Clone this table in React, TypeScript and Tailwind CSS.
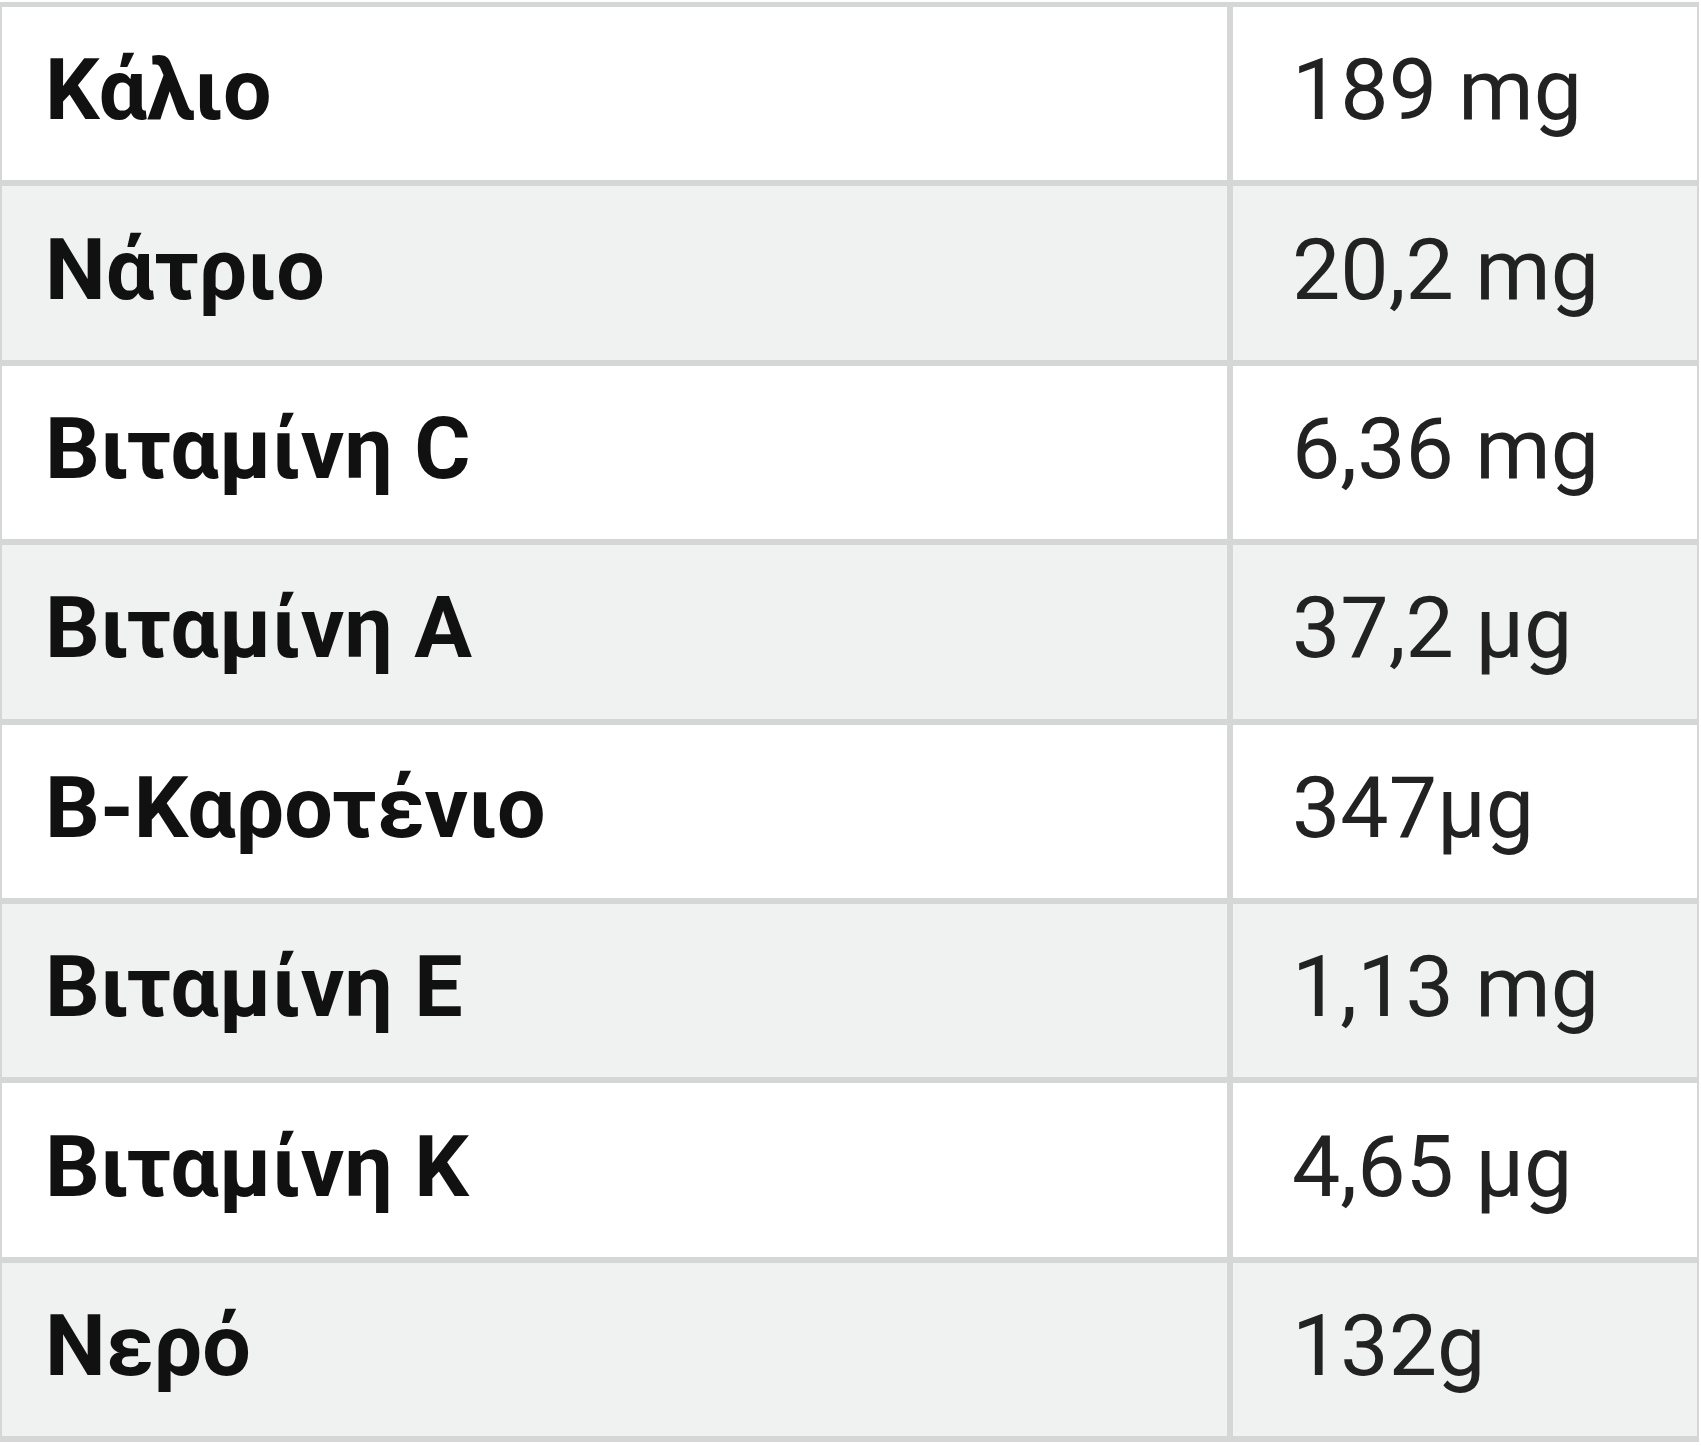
const rows: [string, string][] = [
  ['Κάλιο', '189 mg'],
  ['Νάτριο', '20,2 mg'],
  ['Βιταμίνη C', '6,36 mg'],
  ['Βιταμίνη A', '37,2 μg'],
  ['Β-Καροτένιο', '347μg'],
  ['Βιταμίνη E', '1,13 mg'],
  ['Βιταμίνη K', '4,65 μg'],
  ['Νερό', '132g'],
];

const App = () => {
  return (
    <div className="w-[1701px] h-[1446px] bg-white pt-[2px] font-['Roboto',sans-serif]">
      <div className="w-[1699px] border-t-[5px] border-l-2 border-r-2 border-[#d5d6d6]">
        {rows.map(([label, value], i) => (
          <div
            key={label}
            className={`flex h-[179.4px] border-b-[6px] border-[#d5d6d6] ${i % 2 === 1 ? 'bg-[#f0f1f1]' : 'bg-white'}`}
          >
            <div className="w-[1231px] flex items-center pl-[43px] pb-2 border-r-[6px] border-[#d5d6d6] text-[86px] font-bold text-[#111]">
              {label}
            </div>
            <div className="flex-1 flex items-center pl-[59px] pb-2 text-[86px] text-[#222]">{value}</div>
          </div>
        ))}
      </div>
    </div>
  );
};

export default App;
